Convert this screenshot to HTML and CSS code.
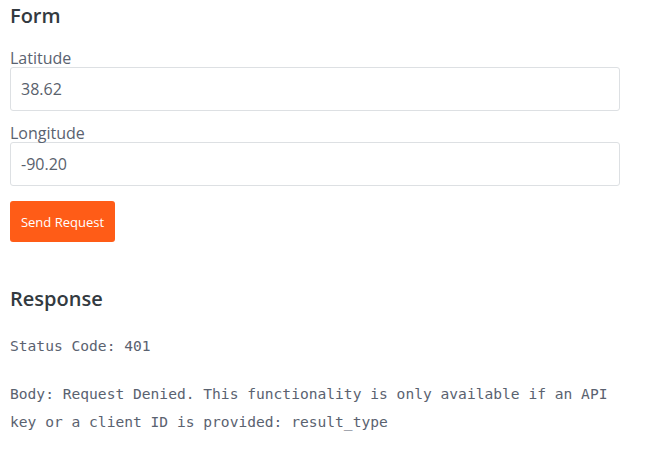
FILE: index.html
```html
<!DOCTYPE html>
<html>
<head>
<meta charset="utf-8">
<link rel="stylesheet" href="styles.css">
</head>
<body>
<div class="page">
  <h2 class="title">Form</h2>
  <div class="field">
    <label class="label">Latitude</label>
    <div class="input">38.62</div>
  </div>
  <div class="field">
    <label class="label">Longitude</label>
    <div class="input">-90.20</div>
  </div>
  <button class="btn">Send Request</button>
  <h2 class="title response">Response</h2>
  <p class="mono status">Status Code: 401</p>
  <p class="mono body">Body: Request Denied. This functionality is only available if an API key or a client ID is provided: result_type</p>
</div>
</body>
</html>
```
FILE: styles.css
```css
html, body { margin: 0; padding: 0; background: #fff; }
.page {
  padding: 0 30px 0 10px;
  font-family: "Open Sans", sans-serif;
  width: 610px;
}
.title {
  margin: 0;
  padding-top: 2px;
  font-size: 20px;
  line-height: 27px;
  font-weight: 600;
  color: #333a40;
}
.field { margin-top: 20px; }
.field + .field { margin-top: 13px; }
.label {
  display: block;
  font-size: 16px;
  line-height: 18px;
  color: #5a6270;
}
.input {
  box-sizing: border-box;
  height: 44px;
  border: 1px solid #dde0e3;
  border-radius: 3px;
  padding: 0 10px;
  display: flex;
  align-items: center;
  font-size: 16px;
  color: #59616c;
}
.btn {
  display: block;
  margin-top: 15px;
  height: 41px;
  width: 105px;
  border: none;
  border-radius: 3px;
  background: #ff5c17;
  color: #fff;
  font-family: "Open Sans", sans-serif;
  font-size: 13px;
  padding: 0;
}
.response { margin-top: 41px; }
.mono {
  font-family: "DejaVu Sans Mono", monospace;
  font-size: 14.6px;
  line-height: 28px;
  color: #5a6270;
  margin: 0;
}
.status { margin-top: 20px; }
.body { margin-top: 20px; }
```
